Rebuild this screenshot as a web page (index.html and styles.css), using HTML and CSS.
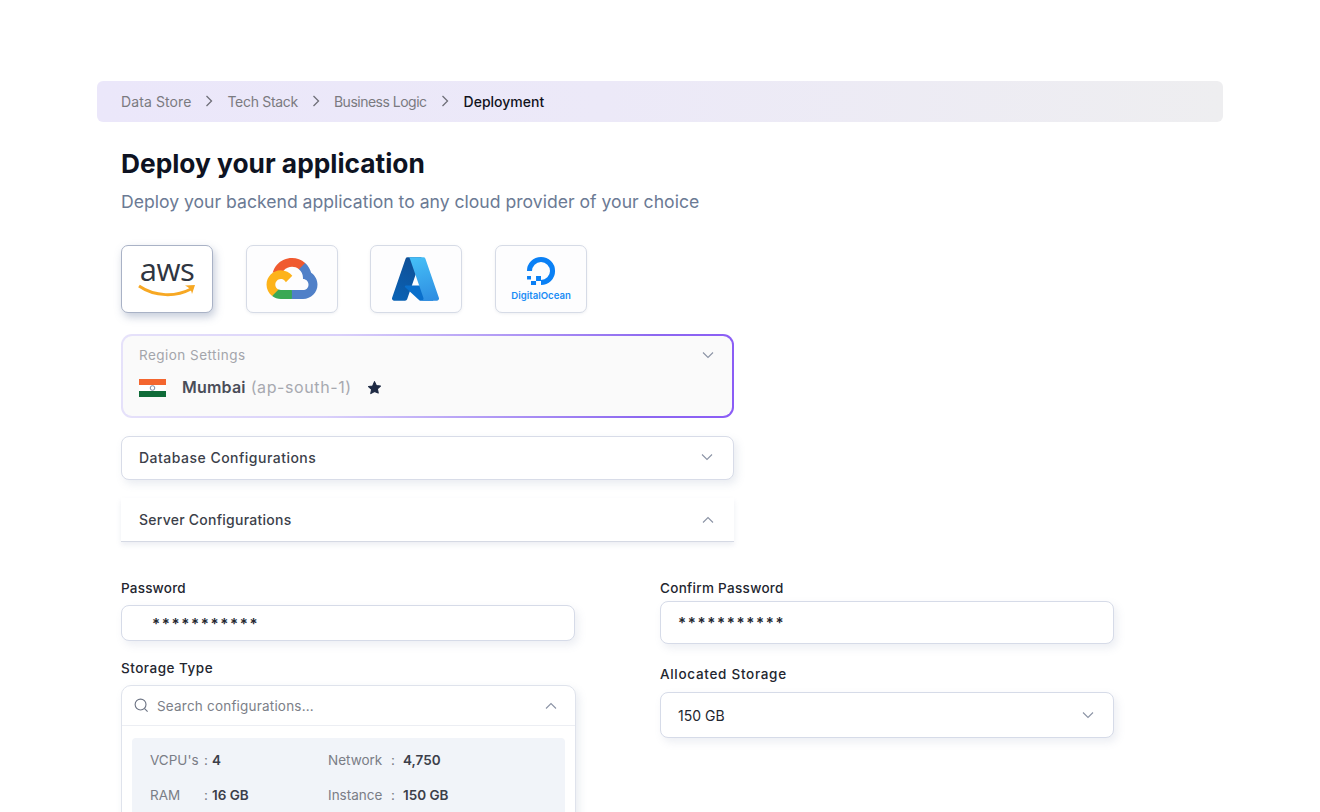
FILE: index.html
```html
<!DOCTYPE html>
<html lang="en">
<head>
  <meta charset="UTF-8" />
  <title>Deploy your application</title>
  <link rel="stylesheet" href="styles.css">
</head>
<body>
  <div class="page">
    <nav class="crumbs">
      <span class="crumb-data">Data Store</span>
      <svg class="crumb-arrow" viewBox="0 0 8 12"><path d="M1.500 1l5 5-5 5"/></svg>
      <span class="crumb-tech">Tech Stack</span>
      <svg class="crumb-arrow" viewBox="0 0 8 12"><path d="M1.500 1l5 5-5 5"/></svg>
      <span class="crumb-logic">Business Logic</span>
      <svg class="crumb-arrow" viewBox="0 0 8 12"><path d="M1.500 1l5 5-5 5"/></svg>
      <span class="current">Deployment</span>
    </nav>

    <main class="content">
      <h1>Deploy your application</h1>
      <p class="sub">Deploy your backend application to any cloud provider of your choice</p>

      <div class="providers">
        <div class="provider selected">
          <div class="aws-logo">
            <span class="aws-text">aws</span>
            <svg class="aws-smile" viewBox="0 0 58 14"><path class="smile-line" d="M1 2c16 11 37 11 52 3"/><path class="smile-tip" d="M47 1.500l10-.5-3 9c-.5-3-1.500-5-3-6-1-.8-2.500-1.700-4-2.500z"/></svg>
          </div>
        </div>
        <div class="provider">
          <svg class="gcloud-logo" viewBox="0 0 256 206">
            <path fill="#f05a30" d="M170.250 56.820l22.250-22.250 1.490-9.370C153.440-11.680 88.980-7.500 52.420 33.920 42.270 45.420 34.730 59.760 30.720 74.570l7.970-1.120 44.500-7.340 3.440-3.510c19.800-21.740 53.270-24.670 76.130-6.170z"/>
            <path fill="#5080c8" d="M224.200 73.920c-5.110-18.840-15.610-35.770-30.210-48.720l-31.230 31.230c13.190 10.780 20.700 27.010 20.380 44.040v5.540c15.350 0 27.800 12.450 27.800 27.800 0 15.350-12.450 27.480-27.800 27.480h-55.670l-5.470 5.930v33.340l5.470 5.230h55.670c39.930.31 72.550-31.490 72.860-71.420.19-24.200-11.750-46.890-31.800-60.450"/>
            <path fill="#3aa854" d="M71.870 205.800h55.590v-44.510H71.870c-3.960 0-7.800-.85-11.400-2.500l-7.890 2.420-22.410 22.250-1.950 7.570c12.570 9.490 27.900 14.830 43.650 14.760"/>
            <path fill="#fdb31a" d="M71.870 61.430C31.940 61.660-.24 94.230 0 134.160c.13 22.300 10.550 43.290 28.220 56.880l32.250-32.250c-13.990-6.320-20.210-22.890-13.890-36.880 6.320-13.990 22.890-20.210 36.880-13.890 6.170 2.790 11.100 7.720 13.890 13.890l32.250-32.250C115.880 71.730 94.550 61.240 71.870 61.430"/>
          </svg>
        </div>
        <div class="provider">
          <svg class="azure-logo" viewBox="4 1 88 84" preserveAspectRatio="none">
            <defs>
              <linearGradient id="azA" x1="0.6" y1="0" x2="0.2" y2="1"><stop offset="0" stop-color="#0f4f96"/><stop offset="1" stop-color="#0a62b4"/></linearGradient>
              <linearGradient id="azB" x1="0.4" y1="0" x2="0.6" y2="1"><stop offset="0" stop-color="#44bdf6"/><stop offset="1" stop-color="#2f8fe2"/></linearGradient>
            </defs>
            <path fill="url(#azA)" d="M33.340 1.540h26.040l-27.030 80.100a4.150 4.150 0 0 1-3.940 2.810H8.150a4.140 4.140 0 0 1-3.930-5.470L29.400 4.380a4.150 4.150 0 0 1 3.940-2.830z"/>
            <path fill="#0a6fcb" d="M71.170 55.260H29.880a1.910 1.910 0 0 0-1.300 3.310l26.530 24.760a4.170 4.170 0 0 0 2.850 1.120h23.380z"/>
            <path fill="url(#azB)" d="M66.600 4.360a4.140 4.140 0 0 0-3.930-2.820H33.650a4.150 4.150 0 0 1 3.930 2.820l25.180 74.620a4.150 4.150 0 0 1-3.930 5.480h29.020a4.150 4.150 0 0 0 3.930-5.480z"/>
          </svg>
        </div>
        <div class="provider">
          <div class="do-logo">
            <svg class="do-mark" viewBox="0 0 32 32">
              <path class="do-ring" d="M16 28.500V24a8 8 0 1 0-8-8H3.500A12.500 12.500 0 1 1 16 28.500z"/>
              <path class="do-bits" d="M11.600 20.400H16v4.500h-4.400zM7.100 24.900h4.500v3.500H7.100zM3.600 20.400h3.500v3.200H3.600z"/>
            </svg>
            <span class="do-text">DigitalOcean</span>
          </div>
        </div>
      </div>

      <div class="accordion">
        <section class="acc region">
          <div class="acc-head">
            <span class="region-label">Region Settings</span>
            <svg class="chev" viewBox="0 0 12 8"><path d="M1 1.500l5 5 5-5"/></svg>
          </div>
          <div class="region-value">
            <svg class="flag" viewBox="0 0 27 18">
              <rect width="27" height="18" fill="#fff"/>
              <rect width="27" height="6" fill="#f4662f"/>
              <rect y="12" width="27" height="6" fill="#0f6b38"/>
              <circle cx="13.500" cy="9" r="2.300" fill="none" stroke="#7c8ba8" stroke-width="1"/>
            </svg>
            <span class="city">Mumbai</span>
            <span class="code">(ap-south-1)</span>
            <svg class="star" viewBox="0 0 14 14"><path d="M7 1.500l1.700 3.600 3.900.5-2.900 2.700.8 3.900L7 10.800l-3.500 1.900.8-3.900-2.900-2.700 3.900-.5z"/></svg>
          </div>
        </section>

        <section class="acc plain">
          <span class="acc-title title-db">Database Configurations</span>
          <svg class="chev" viewBox="0 0 12 8"><path d="M1 1.500l5 5 5-5"/></svg>
        </section>

        <section class="acc open">
          <span class="acc-title title-server">Server Configurations</span>
          <svg class="chev" viewBox="0 0 12 8"><path d="M1 6.500l5-5 5 5"/></svg>
        </section>
      </div>

      <div class="form">
        <div class="col col-left">
          <label class="field-label password-label">Password</label>
          <div class="input pw-left">***********</div>
          <label class="field-label storage-label">Storage Type</label>
          <div class="dropdown">
            <div class="search-row">
              <svg class="search-icon" viewBox="0 0 16 16"><circle cx="7" cy="7" r="5.800"/><path d="M11.300 11.300L14.500 14.500"/></svg>
              <span class="search-text">Search configurations...</span>
              <svg class="chev" viewBox="0 0 12 8"><path d="M1 6.500l5-5 5 5"/></svg>
            </div>
            <div class="option">
              <div class="spec spec-a"><span class="spec-key">VCPU's</span><span class="spec-sep">:</span><b>4</b></div>
              <div class="spec spec-b"><span class="spec-key">Network</span><span class="spec-sep">:</span><b>4,750</b></div>
              <div class="spec spec-a"><span class="spec-key">RAM</span><span class="spec-sep">:</span><b>16 GB</b></div>
              <div class="spec spec-b"><span class="spec-key">Instance</span><span class="spec-sep">:</span><b>150 GB</b></div>
            </div>
          </div>
        </div>
        <div class="col col-right">
          <label class="field-label confirm-label">Confirm Password</label>
          <div class="input pw-right">***********</div>
          <label class="field-label alloc-label">Allocated Storage</label>
          <div class="input select">
            <span>150 GB</span>
            <svg class="chev" viewBox="0 0 12 8"><path d="M1 1.500l5 5 5-5"/></svg>
          </div>
        </div>
      </div>
    </main>
  </div>
</body>
</html>
```

FILE: styles.css
```css
html, body {
  margin: 0;
  padding: 0;
  background: #fff;
}
body {
  font-family: Inter, "Noto Sans", sans-serif;
  color: #1f2433;
}
.page {
  height: 812px;
  overflow: hidden;
  box-sizing: border-box;
  padding: 81px 97px 0;
}

/* breadcrumb */
.crumbs {
  height: 41px;
  box-sizing: border-box;
  display: flex;
  align-items: center;
  padding: 0 0 1px 24px;
  border-radius: 6px;
  background: linear-gradient(90deg, #ebe7fa 0%, #ece9f8 45%, #eeeef0 100%);
  font-size: 14px;
  color: #7a7a80;
}
.crumb-arrow {
  width: 8px;
  height: 12px;
  margin: 0 14px;
  fill: none;
  stroke: #6f6f78;
  stroke-width: 1.300;
}
.crumb-data {
  letter-spacing: 0.1px;
}
.crumb-tech {
  letter-spacing: -0.3px;
}
.crumb-logic {
  letter-spacing: -0.5px;
}
.current {
  color: #11131c;
  font-weight: 500;
  margin-left: 1px;
}

.content {
  padding-left: 24px;
}
h1 {
  margin: 25px 0 0;
  font-size: 26.300px;
  line-height: 34px;
  font-weight: 700;
  color: #0e1322;
}
.sub {
  margin: 8px 0 0;
  font-size: 17.600px;
  line-height: 26px;
  color: #6b7a94;
}

/* cloud providers */
.providers {
  display: flex;
  gap: 32.700px;
  margin-top: 30px;
}
.provider {
  width: 92px;
  height: 68px;
  box-sizing: border-box;
  display: flex;
  align-items: center;
  justify-content: center;
  background: #fdfdfe;
  border: 1px solid #d6dbe6;
  border-radius: 7px;
  box-shadow: 0 1px 3px rgba(120, 130, 160, 0.12);
}
.provider.selected {
  background: #fff;
  border-color: #a9b2c6;
  box-shadow: 2px 4px 8px rgba(90, 110, 150, 0.35);
}
.aws-logo {
  display: flex;
  flex-direction: column;
  align-items: center;
  margin-top: -4px;
}
.aws-text {
  font-family: "Open Sans", sans-serif;
  font-size: 31px;
  font-weight: 500;
  line-height: 27px;
  letter-spacing: -0.5px;
  color: #2f3541;
}
.aws-smile {
  width: 58px;
  height: 14px;
  margin-top: 1px;
}
.smile-line {
  fill: none;
  stroke: #f7a823;
  stroke-width: 3;
}
.smile-tip {
  fill: #f7a823;
}
.gcloud-logo {
  width: 52px;
  height: 41px;
  margin-top: -2px;
}
.azure-logo {
  width: 47px;
  height: 44px;
  margin-right: 2px;
}
.do-logo {
  display: flex;
  flex-direction: column;
  align-items: center;
  margin-top: -3px;
}
.do-mark {
  width: 36px;
  height: 36px;
}
.do-ring, .do-bits {
  fill: #0a80f5;
}
.do-text {
  margin-top: 1px;
  font-size: 9.600px;
  line-height: 12px;
  font-weight: 600;
  color: #1a8cf5;
}

/* accordion cards */
.accordion {
  width: 613px;
  margin-top: 21px;
  display: flex;
  flex-direction: column;
  gap: 18px;
}
.acc {
  box-sizing: border-box;
  font-size: 14px;
}
.region {
  height: 84px;
  padding: 10px 17px 0 16px;
  border: 2px solid transparent;
  border-radius: 11px;
  background: linear-gradient(#fafafa, #fafafa) padding-box,
    linear-gradient(100deg, #e6e2fa 0%, #d9d0fa 35%, #8d68f0 85%, #8b5cf6 100%) border-box;
}
.acc-head {
  display: flex;
  align-items: center;
  justify-content: space-between;
  height: 18px;
}
.region-label {
  font-size: 13.500px;
  letter-spacing: 0.47px;
  color: #a3a5ab;
}
.chev {
  width: 12px;
  height: 8px;
  fill: none;
  stroke: #8b93a5;
  stroke-width: 1.100;
}
.region .chev {
  margin-right: 1px;
}
.region-value {
  display: flex;
  align-items: center;
  margin-top: 13px;
  font-size: 16px;
}
.flag {
  width: 27px;
  height: 18px;
  margin: 1px 16px 0 0;
}
.city {
  font-weight: 600;
  letter-spacing: 0.2px;
  color: #4a4d58;
}
.code {
  margin-left: 5px;
  letter-spacing: 0.6px;
  color: #a7a9b0;
}
.star {
  width: 15px;
  height: 15px;
  margin-left: 15px;
  fill: #1e2a44;
  stroke: #1e2a44;
  stroke-width: 1;
  stroke-linejoin: round;
}
.plain, .open {
  display: flex;
  align-items: center;
  justify-content: space-between;
  padding: 0 20px 0 18px;
}
.plain {
  height: 44px;
  padding: 0 20px 2px 17px;
  background: #fff;
  border: 1px solid #d8dce8;
  border-radius: 8px;
  box-shadow: 3px 4px 8px rgba(120, 135, 170, 0.16);
}
.open {
  height: 44px;
  background: #fff;
  border-bottom: 1px solid #d5d9e4;
  box-shadow: 0 3px 5px rgba(120, 135, 170, 0.14);
}
.acc-title {
  font-weight: 500;
  color: #3c3f4a;
}
.title-db {
  letter-spacing: 0.48px;
}
.title-server {
  letter-spacing: 0.25px;
}

/* form columns */
.form {
  display: flex;
  gap: 85px;
  margin-top: 37px;
}
.col {
  width: 454px;
  flex: none;
}
.field-label {
  display: block;
  font-size: 13.500px;
  line-height: 18px;
  font-weight: 500;
  color: #23262f;
}
.password-label {
  letter-spacing: 0.2px;
}
.confirm-label {
  letter-spacing: 0.3px;
}
.input {
  box-sizing: border-box;
  display: flex;
  align-items: center;
  background: #fff;
  border: 1px solid #d6dbe8;
  border-radius: 8px;
  box-shadow: 3px 4px 8px rgba(120, 135, 170, 0.14);
  font-size: 14px;
  color: #23262f;
}
.pw-left {
  height: 36px;
  margin-top: 8px;
  padding-left: 30px;
  font-size: 15px;
  font-weight: 600;
  letter-spacing: 1.650px;
}
.pw-right {
  height: 43px;
  margin-top: 4px;
  padding-left: 17px;
  font-size: 15px;
  font-weight: 600;
  letter-spacing: 1.650px;
}
.storage-label {
  margin-top: 18px;
  letter-spacing: 0.5px;
}
.alloc-label {
  margin-top: 21px;
  letter-spacing: 0.7px;
}
.select {
  height: 46px;
  margin-top: 9px;
  justify-content: space-between;
  padding: 0 19px 0 17px;
}
.dropdown {
  width: 455px;
  height: 200px;
  margin-top: 8px;
  box-sizing: border-box;
  border: 1px solid #dfe3ec;
  border-radius: 10px;
  background: #fff;
  box-shadow: 3px 4px 8px rgba(120, 135, 170, 0.16);
}
.search-row {
  height: 39px;
  display: flex;
  align-items: center;
  padding: 0 18px 0 12px;
  border-bottom: 1px solid #eceef3;
}
.search-icon {
  width: 15px;
  height: 15px;
  margin-right: 8px;
  fill: none;
  stroke: #6d7484;
  stroke-width: 1.200;
}
.search-text {
  flex: 1;
  font-size: 13.500px;
  letter-spacing: 0.2px;
  color: #7c7f88;
}
.option {
  display: grid;
  grid-template-columns: 178px 1fr;
  row-gap: 17px;
  margin: 12px 10px 0;
  padding: 13px 18px 30px;
  background: #f1f4f9;
  border-radius: 4px;
  font-size: 13.500px;
  line-height: 18px;
}
.spec {
  display: flex;
  color: #7a7d86;
}
.spec b {
  font-weight: 600;
  color: #3c3f4a;
}
.spec-a .spec-key {
  width: 54px;
}
.spec-a .spec-sep {
  width: 8px;
}
.spec-b .spec-key {
  width: 63px;
}
.spec-b .spec-sep {
  width: 12px;
}
```
